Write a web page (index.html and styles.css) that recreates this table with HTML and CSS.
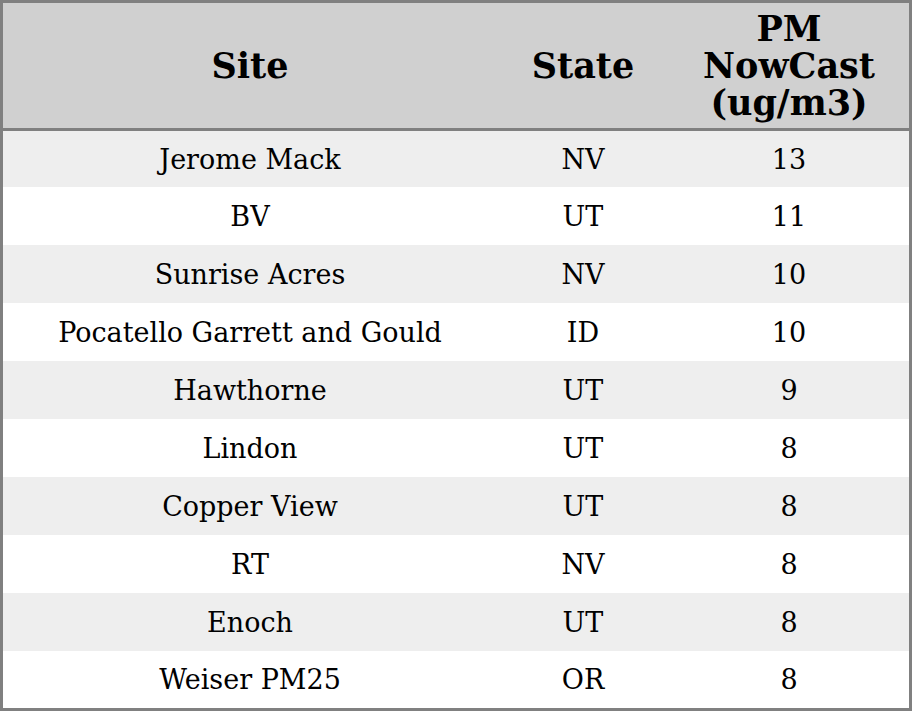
FILE: index.html
```html
<!DOCTYPE html>
<html>
<head>
<meta charset="utf-8">
<link rel="stylesheet" href="styles.css">
</head>
<body>
<table class="grid">
  <thead>
    <tr><th class="c-site">Site</th><th class="c-state">State</th><th class="c-pm">PM NowCast (ug/m3)</th></tr>
  </thead>
  <tbody>
    <tr><td>Jerome Mack</td><td>NV</td><td>13</td></tr>
    <tr><td>BV</td><td>UT</td><td>11</td></tr>
    <tr><td>Sunrise Acres</td><td>NV</td><td>10</td></tr>
    <tr><td>Pocatello Garrett and Gould</td><td>ID</td><td>10</td></tr>
    <tr><td>Hawthorne</td><td>UT</td><td>9</td></tr>
    <tr><td>Lindon</td><td>UT</td><td>8</td></tr>
    <tr><td>Copper View</td><td>UT</td><td>8</td></tr>
    <tr><td>RT</td><td>NV</td><td>8</td></tr>
    <tr><td>Enoch</td><td>UT</td><td>8</td></tr>
    <tr><td>Weiser PM25</td><td>OR</td><td>8</td></tr>
  </tbody>
</table>
</body>
</html>
```
FILE: styles.css
```css
html, body {
  margin: 0;
  padding: 0;
  background: #ffffff;
}
.grid {
  width: 912px;
  border-collapse: collapse;
  table-layout: fixed;
  border: 3px solid #808080;
  font-family: "DejaVu Serif", serif;
  color: #000;
}
.grid th {
  background: #d0d0d0;
  font-size: 35px;
  font-weight: bold;
  line-height: 37px;
  height: 125px;
  padding: 0;
  text-align: center;
  border-bottom: 3px solid #808080;
}
.c-site { width: 494px; }
.c-state { width: 172px; }
.c-pm { width: 240px; }
.grid td {
  font-size: 27px;
  text-align: center;
  height: 58px;
  padding: 0;
}
.grid tbody tr:nth-child(odd) td { background: #eeeeee; }
.grid tbody tr:first-child td { height: 56px; }
.grid tbody tr:last-child td { height: 57px; }
```
